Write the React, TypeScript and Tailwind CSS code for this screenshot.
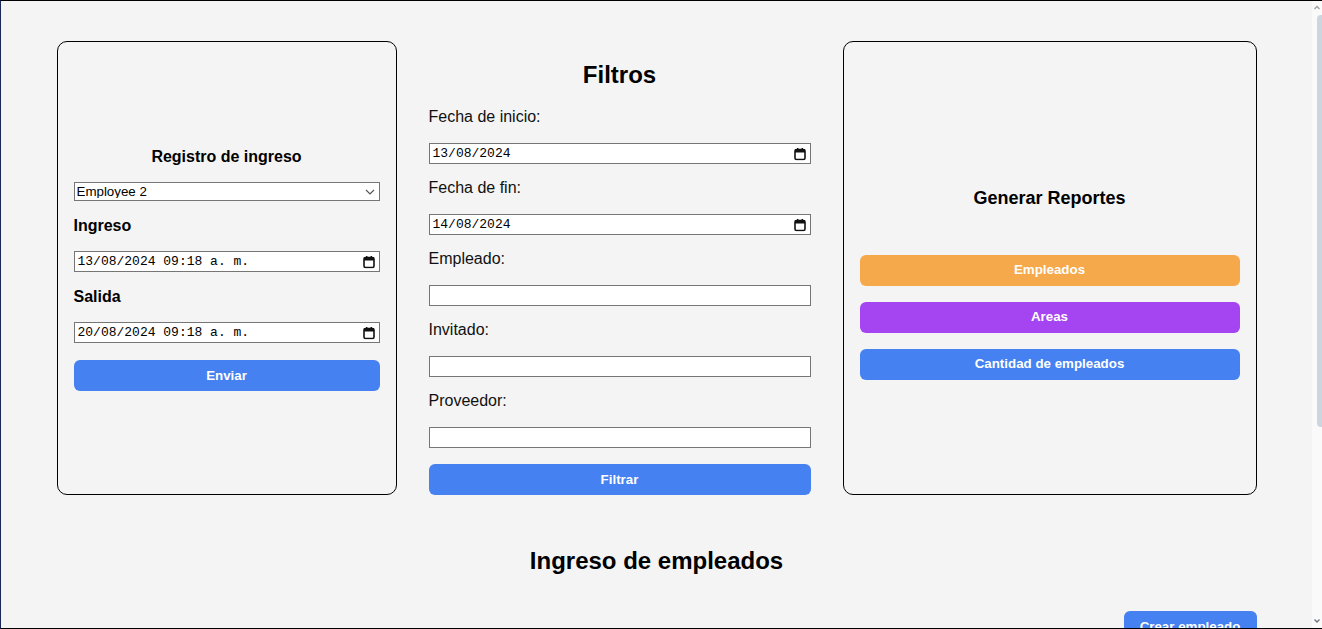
import React from "react";

const CalendarIcon: React.FC = () => (
  <svg
    width="12"
    height="13"
    viewBox="0 0 12 13"
    className="pointer-events-none absolute right-[5px] top-1/2 -translate-y-1/2"
  >
    <rect x="1" y="2" width="10" height="10" rx="1.5" fill="none" stroke="#111" strokeWidth="1.6" />
    <rect x="1" y="2" width="10" height="3" fill="#111" />
    <rect x="3" y="0.5" width="1.4" height="2.5" fill="#111" />
    <rect x="7.6" y="0.5" width="1.4" height="2.5" fill="#111" />
  </svg>
);

const DateField: React.FC<{ value: string }> = ({ value }) => (
  <div className="relative">
    <input
      type="text"
      readOnly
      value={value}
      className="block h-[21px] w-full border border-[#767676] bg-white pl-[3px] pr-6 text-[13px] text-black outline-none"
      style={{ fontFamily: '"Liberation Mono", "DejaVu Sans Mono", monospace' }}
    />
    <CalendarIcon />
  </div>
);

const TextField: React.FC = () => (
  <input
    type="text"
    className="block h-[21px] w-full border border-[#767676] bg-white px-[3px] text-[13px] outline-none"
  />
);

const FilterLabel: React.FC<{ children: React.ReactNode; first?: boolean }> = ({ children, first }) => (
  <label className={`mb-3 block text-base leading-7 text-[#111] ${first ? "mt-3" : "mt-[10px]"}`}>
    {children}
  </label>
);

const ActionButton: React.FC<{ title: string; color: string; className?: string }> = ({
  title,
  color,
  className = "",
}) => (
  <button
    className={`h-[31px] w-full rounded-md text-[13.33px] font-bold text-white ${color} ${className}`}
  >
    {title}
  </button>
);

// page scrollbar, drawn since the capture hides the native one
const ScrollBar: React.FC = () => (
  <div className="flex w-[10px] shrink-0 flex-col items-end bg-[#fafafa]">
    <svg width="10" height="14" viewBox="0 0 10 14" className="shrink-0">
      <path d="M2.5 8l2.5-2.5L7.5 8" fill="none" stroke="#9aa0a6" strokeWidth="1.3" />
    </svg>
    <div className="h-[412px] w-[5px] rounded-l-sm bg-[#ccd6e1]" />
    <div className="flex-1" />
    <svg width="10" height="14" viewBox="0 0 10 14" className="shrink-0">
      <path d="M2.5 5.5L5 8l2.5-2.5" fill="none" stroke="#6b7280" strokeWidth="1.3" />
    </svg>
  </div>
);

export default function App() {
  return (
    <div
      className="flex h-[629px] overflow-hidden border-y border-l border-black border-l-[#1b2758] bg-[#f4f4f4]"
      style={{ fontFamily: '"Liberation Sans", Arial, sans-serif' }}
    >
      <main className="min-w-0 flex-1 overflow-hidden">
        <div className="mx-auto w-[1200px] pt-10 pb-[29px]">
          <div className="flex gap-8">
            {/* Registro de ingreso */}
            <section className="flex w-[340px] flex-col justify-center rounded-[10px] border border-black px-4">
              <h3 className="mb-[13px] text-center text-base leading-6 font-bold text-black">
                Registro de ingreso
              </h3>
              <div className="relative">
                <select
                  defaultValue="2"
                  className="block h-[19px] w-full appearance-none border border-[#767676] bg-white pl-[2px] text-[13.33px] leading-none text-black outline-none"
                >
                  <option value="1">Employee 1</option>
                  <option value="2">Employee 2</option>
                  <option value="3">Employee 3</option>
                </select>
                <svg
                  width="10"
                  height="6"
                  viewBox="0 0 10 6"
                  className="pointer-events-none absolute right-[5px] top-1/2 -translate-y-1/2"
                >
                  <path d="M1 1l4 4 4-4" fill="none" stroke="#555" strokeWidth="1.2" />
                </svg>
              </div>
              <h4 className="mb-[13px] mt-[13px] text-base leading-6 font-bold text-black">Ingreso</h4>
              <DateField value="13/08/2024 09:18 a. m." />
              <h4 className="mb-[13px] mt-[13px] text-base leading-6 font-bold text-black">Salida</h4>
              <DateField value="20/08/2024 09:18 a. m." />
              <ActionButton title="Enviar" color="bg-[#4581f1]" className="mt-[17px]" />
            </section>

            {/* Filtros */}
            <section className="flex w-[382px] flex-col pt-[18px]">
              <h2 className="text-center text-2xl leading-8 font-bold text-black">Filtros</h2>
              <FilterLabel first>Fecha de inicio:</FilterLabel>
              <DateField value="13/08/2024" />
              <FilterLabel>Fecha de fin:</FilterLabel>
              <DateField value="14/08/2024" />
              <FilterLabel>Empleado:</FilterLabel>
              <TextField />
              <FilterLabel>Invitado:</FilterLabel>
              <TextField />
              <FilterLabel>Proveedor:</FilterLabel>
              <TextField />
              <ActionButton title="Filtrar" color="bg-[#4581f1]" className="mt-4" />
            </section>

            {/* Generar Reportes */}
            <section className="flex flex-1 flex-col justify-center rounded-[10px] border border-black px-4 pt-[27px]">
              <h3 className="mb-[43px] text-center text-lg leading-7 font-bold text-black">
                Generar Reportes
              </h3>
              <div className="flex flex-col gap-4">
                <ActionButton title="Empleados" color="bg-[#f5a94a]" />
                <ActionButton title="Areas" color="bg-[#a445f1]" />
                <ActionButton title="Cantidad de empleados" color="bg-[#4581f1]" />
              </div>
            </section>
          </div>

          <h2 className="mt-[50px] text-center text-2xl leading-8 font-bold text-black">
            Ingreso de empleados
          </h2>
          <div className="mt-[34px] flex justify-end">
            <button className="h-[31px] w-[133px] rounded-md bg-[#4581f1] text-[13.33px] font-bold text-white">
              Crear empleado
            </button>
          </div>
          <div className="h-[240px]" />
        </div>
      </main>
      <ScrollBar />
    </div>
  );
}
